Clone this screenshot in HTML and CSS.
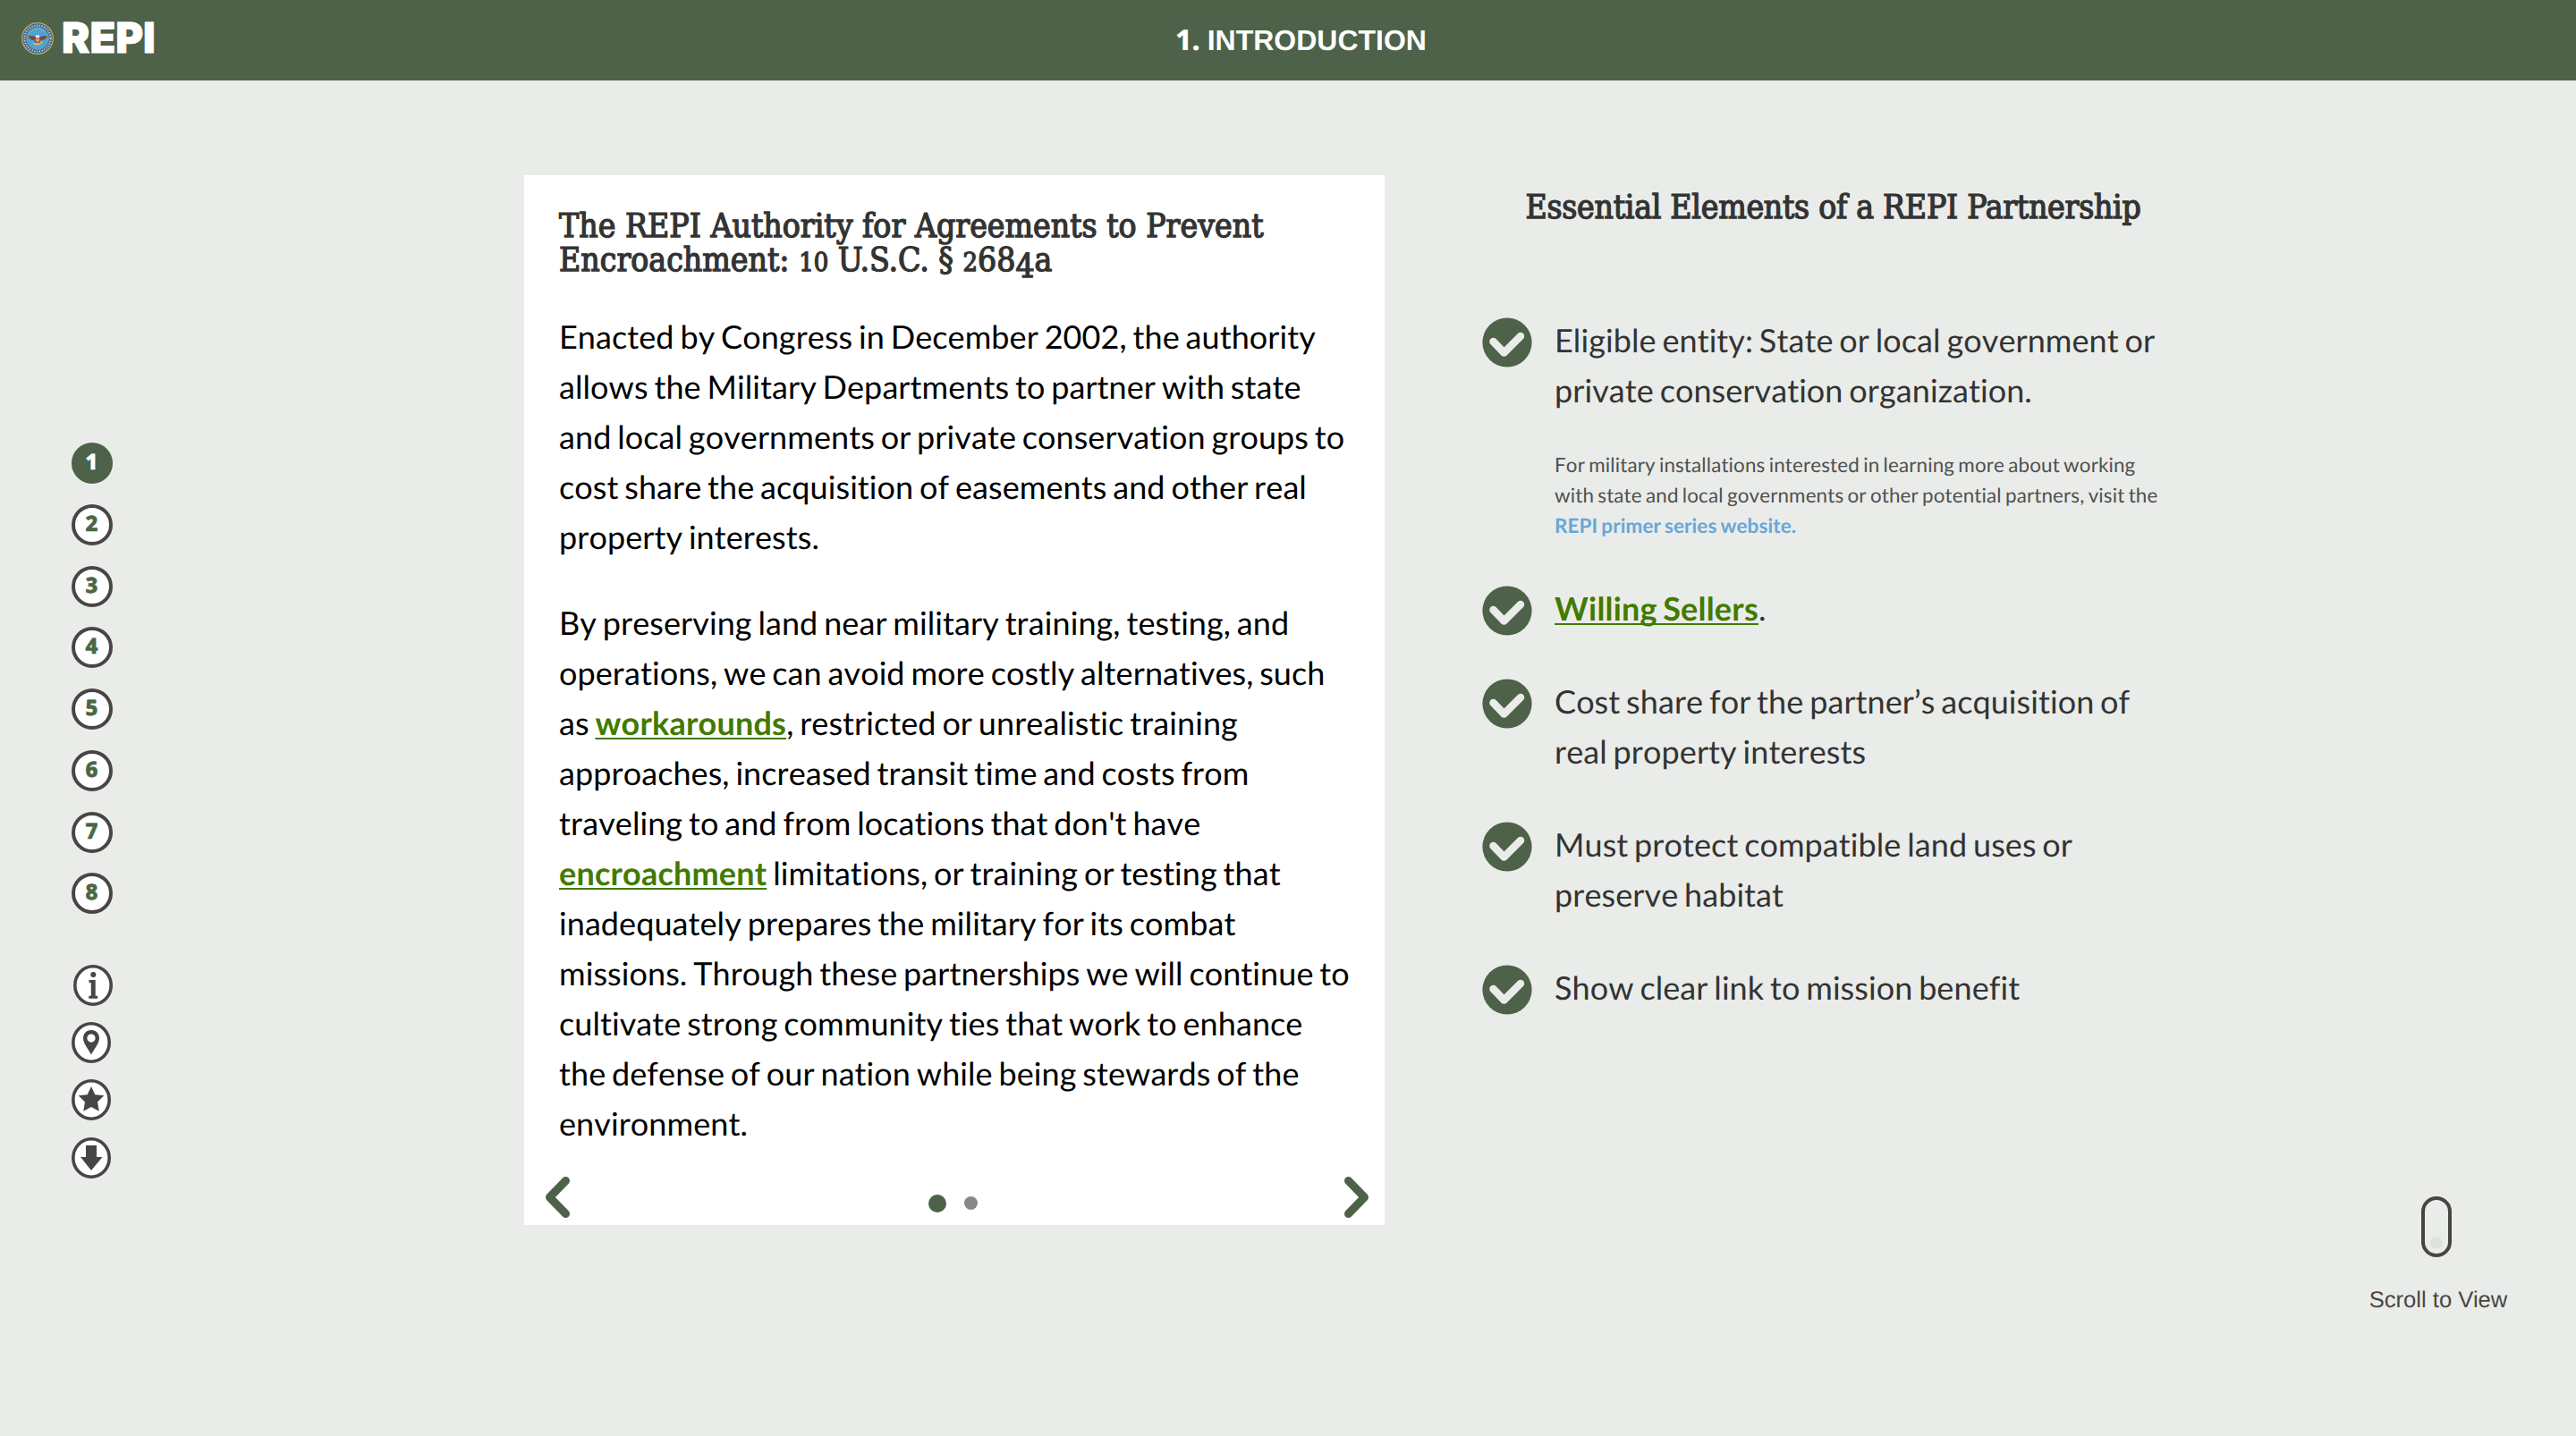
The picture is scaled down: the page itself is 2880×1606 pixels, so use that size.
FILE: index.html
```html
<!DOCTYPE html>
<html lang="en">
<head>
<meta charset="utf-8">
<title>REPI - Introduction</title>
<link rel="stylesheet" href="styles.css">
</head>
<body>
<header class="topbar">
  <div class="logo">
    <svg class="seal" viewBox="0 0 36 36">
      <circle cx="18" cy="18" r="17.3" fill="#3e629c" stroke="#b3ae55" stroke-width="1.3"/>
      <circle cx="18" cy="18" r="14.6" fill="none" stroke="#c3cfdf" stroke-width="2" stroke-dasharray="1.3 1.5"/>
      <circle cx="18" cy="18" r="12.4" fill="#4ba3d6" stroke="#9dab62" stroke-width=".6"/>
      <path d="M10 11a10.5 10.5 0 0 1 16 0" fill="none" stroke="#9dbf8a" stroke-width="1" stroke-dasharray="1.5 1"/>
      <path d="M13 23q5 4 11-1M14 25l8-4" fill="none" stroke="#c9c257" stroke-width="1.5"/>
      <path d="M7 15.500q5-1.500 9 1h4q4-2.500 9-1-2 4-7 4.500l-2 3h-4l-2-3q-5-.5-7-4.500z" fill="#7d4a3a"/>
      <path d="M15.800 17.500h4.400v3l-2.200 2.500-2.200-2.500z" fill="#d98e8e"/>
      <path d="M16 14.500h4v2.500h-4z" fill="#f0f3f5"/>
    </svg>
    <span class="brand">REPI</span>
  </div>
  <h1 class="title"><span class="title-no">1.</span> <span class="title-text">INTRODUCTION</span></h1>
</header>

<main class="page">
  <nav class="rail">
    <div class="steps">
      <a class="step active">1</a><a class="step">2</a><a class="step">3</a><a class="step">4</a><a class="step">5</a><a class="step">6</a><a class="step">7</a><a class="step">8</a>
    </div>
    <div class="tools">
      <svg class="tool tool-info" viewBox="0 0 44 46"><ellipse class="ring" cx="22" cy="23" rx="20.200" ry="21.200"/><circle cx="22.300" cy="11" r="3"/><path d="M17.500 17h7.200v17.800h2.500v3h-9.900v-3h2.500V20h-2.300z"/></svg>
      <svg class="tool" viewBox="0 0 44 46"><ellipse class="ring" cx="22" cy="23" rx="20.200" ry="21.200"/><path fill-rule="evenodd" d="M22 9c-5.500 0-9 4-9 9 0 6 5.500 12 9 18.500 3.500-6.500 9-12.500 9-18.500 0-5-3.500-9-9-9zm0 4.500a4.600 4.600 0 1 1 0 9.200 4.600 4.600 0 0 1 0-9.200z"/></svg>
      <svg class="tool" viewBox="0 0 44 46"><ellipse class="ring" cx="22" cy="23" rx="20.200" ry="21.200"/><path d="M22 8l4.300 9.300 10 1-7.300 7.200 1.800 10.200L22 31l-8.800 4.700L15 25.500l-7.300-7.200 10-1z"/></svg>
      <svg class="tool" viewBox="0 0 44 46"><ellipse class="ring" cx="22" cy="23" rx="20.200" ry="21.200"/><path d="M16 9h12v13h6.500L22 37 10 22h6z"/></svg>
    </div>
  </nav>

  <section class="card">
    <h2 class="slab card-title">The REPI Authority for Agreements to Prevent<br>Encroachment: <span class="low">10</span> U.S.C. § <span class="low">2</span>68<span class="drop">4</span>a</h2>
    <p>Enacted by Congress in December 2002, the authority<br>allows the Military Departments to partner with state<br>and local governments or private conservation groups to<br>cost share the acquisition of easements and other real<br>property interests.</p>
    <p>By preserving land near military training, testing, and<br>operations, we can avoid more costly alternatives, such<br>as <a class="link">workarounds</a>, restricted or unrealistic training<br>approaches, increased transit time and costs from<br>traveling to and from locations that don't have<br><a class="link">encroachment</a> limitations, or training or testing that<br>inadequately prepares the military for its combat<br>missions. Through these partnerships we will continue to<br>cultivate strong community ties that work to enhance<br>the defense of our nation while being stewards of the<br>environment.</p>
    <div class="pager">
      <svg class="chev" viewBox="0 0 28 46"><path d="M23.500 4.500L5.500 23l18 18.500"/></svg>
      <div class="dots"><span class="dot on"></span><span class="dot"></span></div>
      <svg class="chev" viewBox="0 0 28 46"><path d="M4.500 4.500l18 18.500-18 18.500"/></svg>
    </div>
  </section>

  <section class="elements">
    <h2 class="slab side-title">Essential Elements of a REPI Partnership</h2>
    <ul class="list">
      <li><svg class="check" viewBox="0 0 56 56"><circle cx="28" cy="28" r="27.600"/><path d="M12.500 27L24.500 39.500 43 21"/></svg>
        <div><p>Eligible entity: State or local government or<br>private conservation organization.</p>
        <p class="note">For military installations interested in learning more about working<br>with state and local governments or other potential partners, visit the<br><a class="note-link">REPI primer series website.</a></p></div></li>
      <li><svg class="check" viewBox="0 0 56 56"><circle cx="28" cy="28" r="27.600"/><path d="M12.500 27L24.500 39.500 43 21"/></svg><p><a class="link">Willing Sellers</a>.</p></li>
      <li><svg class="check" viewBox="0 0 56 56"><circle cx="28" cy="28" r="27.600"/><path d="M12.500 27L24.500 39.500 43 21"/></svg><p>Cost share for the partner’s acquisition of<br>real property interests</p></li>
      <li><svg class="check" viewBox="0 0 56 56"><circle cx="28" cy="28" r="27.600"/><path d="M12.500 27L24.500 39.500 43 21"/></svg><p>Must protect compatible land uses or<br>preserve habitat</p></li>
      <li><svg class="check" viewBox="0 0 56 56"><circle cx="28" cy="28" r="27.600"/><path d="M12.500 27L24.500 39.500 43 21"/></svg><p>Show clear link to mission benefit</p></li>
    </ul>
  </section>

  <aside class="scroll">
    <div class="mouse"><span class="wheel"></span></div>
    <span class="scroll-text">Scroll to View</span>
  </aside>
</main>
</body>
</html>
```

FILE: styles.css
```css
* { box-sizing: border-box; margin: 0; padding: 0; }
body {
  width: 2880px;
  height: 1606px;
  overflow: hidden;
  background: #e9ece9;
  color: #333;
  font-family: Lato, sans-serif;
  font-size: 36px;
  line-height: 56px;
  text-rendering: geometricPrecision;
  font-variant-ligatures: none;
}
p { font-kerning: none; word-spacing: -2.500px; letter-spacing: .080px; }
.topbar {
  display: grid;
  grid-template-columns: 1314px 1fr;
  align-items: start;
  height: 90px;
  background: #4d6249;
  color: #fff;
}
.logo { display: flex; align-items: center; gap: 9px; padding: 14px 0 0 24px; }
.seal { width: 36px; height: 36px; }
.brand { font: 900 47px/56px Inter, sans-serif; letter-spacing: 0; padding-top: 1px; -webkit-text-stroke: .8px #fff; }
.title { display: flex; gap: 8px; font: bold 32px/36px "Liberation Sans", sans-serif; padding-top: 27px; white-space: nowrap; }
.title-no { font-family: "Noto Sans", sans-serif; font-weight: 800; }

.page {
  display: grid;
  grid-template-columns: 586px 962px 110px 780px 1fr;
  height: 1516px;
}
.rail { padding: 405px 0 0 80px; }
.steps { display: flex; flex-direction: column; gap: 22.750px; }
.step {
  display: flex;
  align-items: center;
  justify-content: center;
  width: 46px;
  height: 46px;
  padding: 0 1px 2px 0;
  border: 4px solid #474644;
  border-radius: 50%;
  background: #fff;
  color: #4a6746;
  font: 800 24px/36px "Noto Sans", sans-serif;
  -webkit-text-stroke: .6px currentColor;
}
.step.active { border-color: #4d6249; background: #4d6249; color: #fff; }
.tools { display: flex; flex-direction: column; gap: 18.300px; margin-top: 56.500px; }
.tool { display: block; width: 44px; height: 46px; fill: #474644; }
.tool-info { margin-left: 2px; }
.ring { fill: #fff; stroke: #474644; stroke-width: 3.600; }

.card {
  display: flex;
  flex-direction: column;
  height: 1174px;
  margin-top: 106px;
  padding: 38px 17px 8px 39px;
  background: #fff;
  color: #000;
  white-space: nowrap;
}
.slab {
  font-family: "DejaVu Serif Condensed", "DejaVu Serif", serif;
  font-stretch: condensed;
  font-weight: normal;
  font-size: 37px;
  line-height: 38px;
  color: #333;
  -webkit-text-stroke: 1.3px #333;
  white-space: nowrap;
}
.card-title { margin-bottom: 38px; }
.low { font-size: .78em; line-height: 1; }
.drop { position: relative; top: 7px; }
.card p + p { margin-top: 40px; }
.link { color: #427a00; font-weight: bold; letter-spacing: .200px; text-decoration: underline; text-decoration-thickness: 2px; text-underline-offset: 3px; text-decoration-skip-ink: none; }
.pager { display: flex; justify-content: space-between; align-items: center; margin: auto 0 0 -16px; }
.chev { width: 28px; height: 46px; fill: none; stroke: #4d6249; stroke-width: 9; stroke-linecap: round; stroke-linejoin: round; }
.dots { display: flex; align-items: center; gap: 20px; padding: 13px 9px 0 0; }
.dot { width: 15px; height: 15px; border-radius: 50%; background: #888; }
.dot.on { width: 20px; height: 20px; background: #4d6249; }

.elements { grid-column: 4; padding-top: 123px; white-space: nowrap; }
.side-title { padding-left: 3px; text-align: center; letter-spacing: -.28px; }
.list { display: flex; flex-direction: column; gap: 48px; margin-top: 101px; list-style: none; }
.list li { display: flex; gap: 25px; margin-left: -1px; }
.check { flex: none; width: 56px; height: 56px; margin: 3px 0 -3px; fill: #4d6249; }
.check path { fill: none; stroke: #e9ece9; stroke-width: 8.500; stroke-linejoin: round; stroke-linecap: round; }
.note { margin: 39px 0 -1px; color: #505050; font-size: 22.400px; line-height: 34px; word-spacing: -1.600px; letter-spacing: .140px; }
.note-link { color: #68a6d8; font-weight: bold; }

.scroll { display: flex; flex-direction: column; align-items: center; width: 154px; margin: 1248px 0 0 211px; color: #474644; white-space: nowrap; }
.mouse { display: flex; align-items: flex-end; justify-content: center; width: 34px; height: 68px; margin-right: 4px; padding-bottom: 6px; border: 4px solid #474644; border-radius: 17px; }
.wheel { width: 14px; height: 12px; border-radius: 6px; background: #dfe1df; }
.scroll-text { margin-top: 33px; font: 25.600px/30px "Liberation Sans", sans-serif; }
```
